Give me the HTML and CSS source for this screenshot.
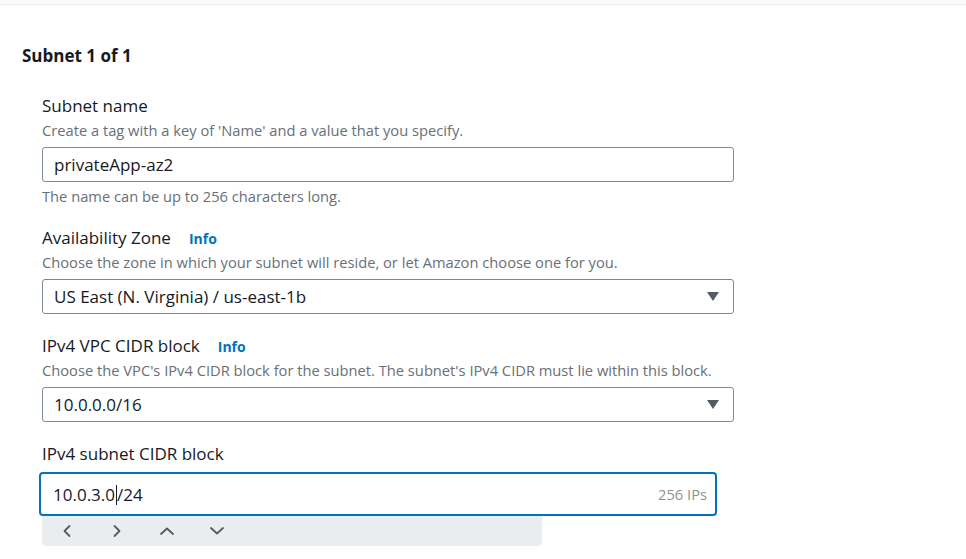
FILE: index.html
```html
<!DOCTYPE html>
<html lang="en">
<head>
<meta charset="utf-8">
<title>Subnet settings</title>
<link rel="stylesheet" href="styles.css">
</head>
<body>
<div class="topbar"></div>
<main class="panel">
  <h2 class="title">Subnet 1 of 1</h2>
  <div class="fields">
    <div class="field">
      <div class="label">Subnet name</div>
      <div class="desc">Create a tag with a key of 'Name' and a value that you specify.</div>
      <div class="control"><span>privateApp-az2</span></div>
      <div class="constraint">The name can be up to 256 characters long.</div>
    </div>
    <div class="field">
      <div class="label">Availability Zone <a class="info">Info</a></div>
      <div class="desc">Choose the zone in which your subnet will reside, or let Amazon choose one for you.</div>
      <div class="control select"><span>US East (N. Virginia) / us-east-1b</span><span class="caret-down"></span></div>
    </div>
    <div class="field">
      <div class="label">IPv4 VPC CIDR block <a class="info">Info</a></div>
      <div class="desc">Choose the VPC's IPv4 CIDR block for the subnet. The subnet's IPv4 CIDR must lie within this block.</div>
      <div class="control select"><span>10.0.0.0/16</span><span class="caret-down"></span></div>
    </div>
    <div class="field">
      <div class="label">IPv4 subnet CIDR block</div>
      <div class="control focused"><span>10.0.3.0<span class="cursor"></span>/24</span><span class="ips">256 IPs</span></div>
      <div class="toolbar">
        <span class="tool"><svg width="16" height="16" viewBox="0 0 16 16"><polyline points="10.5,3 5.5,8 10.5,13"/></svg></span>
        <span class="tool"><svg width="16" height="16" viewBox="0 0 16 16"><polyline points="5.5,3 10.5,8 5.5,13"/></svg></span>
        <span class="tool"><svg width="16" height="16" viewBox="0 0 16 16"><polyline points="2,11 8,5.5 14,11"/></svg></span>
        <span class="tool"><svg width="16" height="16" viewBox="0 0 16 16"><polyline points="2,5 8,10.5 14,5"/></svg></span>
      </div>
    </div>
  </div>
</main>
</body>
</html>
```

FILE: styles.css
```css
html, body {
  margin: 0;
  padding: 0;
  background: #ffffff;
}

body {
  font-family: "Open Sans", "Noto Sans", "Liberation Sans", sans-serif;
  color: #16191f;
}

.topbar {
  height: 4px;
  background: #fafafa;
  border-bottom: 1px solid #e9ebed;
}

.panel {
  padding: 0 0 0 22px;
}

.title {
  margin: 39px 0 0;
  font-size: 17px;
  line-height: 24px;
  font-weight: 700;
  color: #16191f;
}

.fields {
  margin-top: 26px;
  padding-left: 20px;
}

.field + .field {
  margin-top: 20px;
}

.label {
  display: flex;
  align-items: baseline;
  height: 24px;
  font-size: 17px;
  line-height: 24px;
  color: #16191f;
}

.info {
  margin-left: 18px;
  font-size: 14px;
  line-height: 18px;
  font-weight: 700;
  color: #0073bb;
}

.desc,
.constraint {
  font-size: 14.7px;
  line-height: 20px;
  color: #687078;
}

.desc {
  margin-top: 2px;
}

.constraint {
  margin-top: 4px;
}

.control {
  box-sizing: border-box;
  width: 692px;
  height: 35px;
  margin-top: 7px;
  padding: 0 11px;
  display: flex;
  align-items: center;
  justify-content: space-between;
  border: 1px solid #7d8998;
  border-radius: 3px;
  font-size: 17px;
  color: #16191f;
  white-space: nowrap;
}

.select {
  padding-right: 14px;
}

.caret-down {
  width: 0;
  height: 0;
  border-left: 6px solid transparent;
  border-right: 6px solid transparent;
  border-top: 9px solid #545b64;
}

.focused {
  width: 678px;
  height: 44px;
  margin-left: -3px;
  margin-top: 6px;
  padding: 0 8px 0 12px;
  border: 2px solid #0073bb;
  border-radius: 4px;
}

.cursor {
  display: inline-block;
  width: 1px;
  height: 20px;
  margin: 0 0 0 1px;
  vertical-align: -4px;
  background: #16191f;
}

.ips {
  font-size: 14.7px;
  color: #879596;
}

.toolbar {
  width: 500px;
  height: 30px;
  display: flex;
  background: #eaeded;
  border-radius: 0 0 4px 4px;
}

.tool {
  width: 50px;
  display: flex;
  align-items: center;
  justify-content: center;
}

.tool svg polyline {
  fill: none;
  stroke: #545b64;
  stroke-width: 1.8;
  stroke-linecap: round;
  stroke-linejoin: round;
}
```
